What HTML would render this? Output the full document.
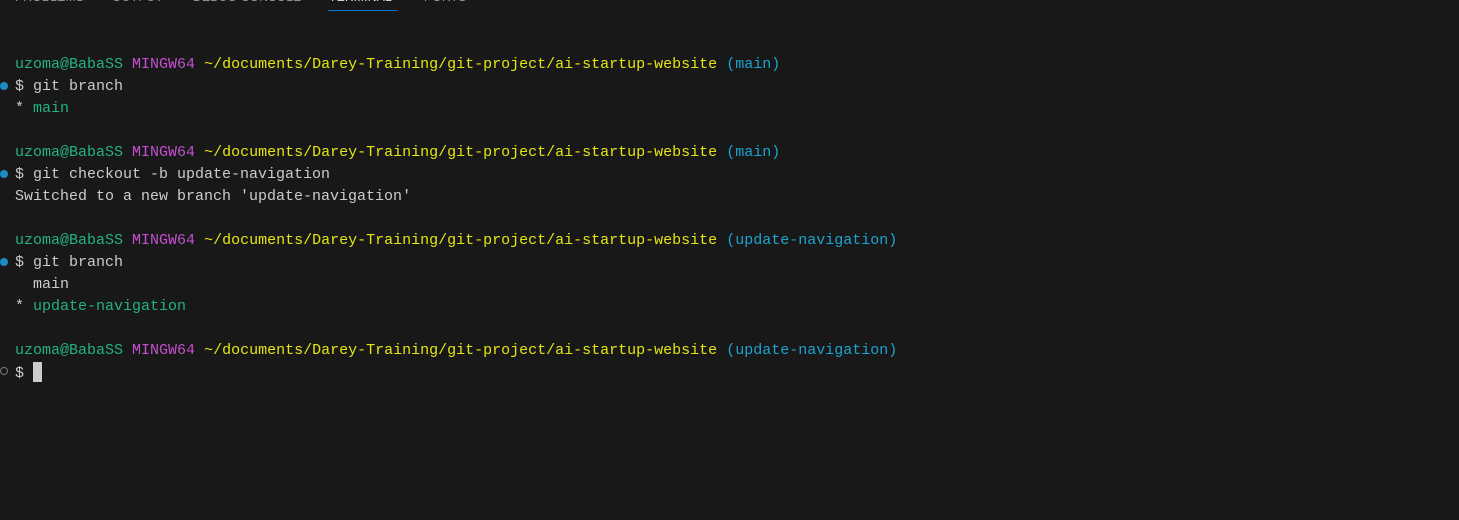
<!DOCTYPE html>
<html><head><meta charset="utf-8"><style>
html,body{margin:0;padding:0;background:#181818;width:1459px;height:520px;overflow:hidden}
.tabs{position:absolute;top:-10px;left:0;height:20px;font:12px "Liberation Sans",sans-serif;color:#9d9d9d;letter-spacing:.3px}
.tabs span{position:absolute;top:0;white-space:nowrap}
.ul{position:absolute;left:328px;top:10px;width:69px;height:1px;background:#0078d4}
.term{position:absolute;left:15px;top:54px;font:15px/22px "Liberation Mono",monospace;color:#cccccc;white-space:pre}
.g{color:#23b37e}.m{color:#c64fd0}.y{color:#e5e510}.c{color:#1ca4d0}
.dot{position:absolute;left:0;width:8px;height:8px;border-radius:50%;background:#1a8bc4}
.dot.o{background:none;border:1.5px solid #7a7a7a;width:6px;height:6px}
.cur{display:inline-block;width:9px;height:20px;background:#cccccc;vertical-align:-5px}
</style></head><body>
<div class="tabs"><span style="left:15px">PROBLEMS</span><span style="left:112px">OUTPUT</span><span style="left:193px">DEBUG CONSOLE</span><span style="left:329px;color:#e7e7e7">TERMINAL</span><span style="left:424px">PORTS</span></div>
<div class="ul"></div>
<div class="dot" style="top:82px"></div>
<div class="dot" style="top:170px"></div>
<div class="dot" style="top:258px"></div>
<div class="dot o" style="top:367px"></div>
<div class="term"><span class="g">uzoma@BabaSS</span> <span class="m">MINGW64</span> <span class="y">~/documents/Darey-Training/git-project/ai-startup-website</span> <span class="c">(main)</span>
$ git branch
* <span class="g">main</span>

<span class="g">uzoma@BabaSS</span> <span class="m">MINGW64</span> <span class="y">~/documents/Darey-Training/git-project/ai-startup-website</span> <span class="c">(main)</span>
$ git checkout -b update-navigation
Switched to a new branch 'update-navigation'

<span class="g">uzoma@BabaSS</span> <span class="m">MINGW64</span> <span class="y">~/documents/Darey-Training/git-project/ai-startup-website</span> <span class="c">(update-navigation)</span>
$ git branch
  main
* <span class="g">update-navigation</span>

<span class="g">uzoma@BabaSS</span> <span class="m">MINGW64</span> <span class="y">~/documents/Darey-Training/git-project/ai-startup-website</span> <span class="c">(update-navigation)</span>
$ <span class="cur"></span></div>
</body></html>
